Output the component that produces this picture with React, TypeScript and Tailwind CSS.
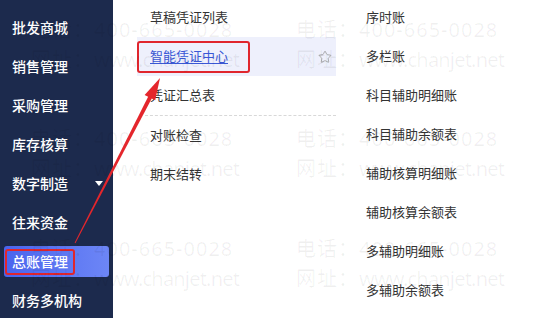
import { Star } from "lucide-react";

const sideItems = [
  "批发商城",
  "销售管理",
  "采购管理",
  "库存核算",
  "数字制造",
  "往来资金",
  "总账管理",
  "财务多机构",
];

const rightItems = [
  "序时账",
  "多栏账",
  "科目辅助明细账",
  "科目辅助余额表",
  "辅助核算明细账",
  "辅助核算余额表",
  "多辅助明细账",
  "多辅助余额表",
];

const marks = [
  { left: 31, top: 15 },
  { left: 296, top: 15 },
  { left: 31, top: 124 },
  { left: 296, top: 124 },
  { left: 31, top: 234 },
  { left: 296, top: 234 },
];

function SideItem({ label }: { label: string }) {
  if (label === "总账管理") {
    return (
      <div className="h-[39px] flex items-center px-1">
        <div className="h-[31px] w-full rounded-[3px] bg-gradient-to-r from-[#4a64ee] to-[#6d86f6] flex items-center pl-[1px]">
          <div className="h-[26px] px-[5px] border-2 border-[#e0262d] rounded-[3px] flex items-center text-white">
            {label}
          </div>
        </div>
      </div>
    );
  }
  return (
    <div className="h-[39px] flex items-center pl-3 pr-[10px] text-white">
      <span className="flex-1">{label}</span>
      {label === "数字制造" && (
        <span className="w-0 h-0 border-l-[4px] border-r-[4px] border-t-[5px] border-l-transparent border-r-transparent border-t-white" />
      )}
    </div>
  );
}

export default function App() {
  return (
    <div
      className="relative w-[533px] h-[318px] overflow-hidden bg-white flex"
      style={{ fontFamily: '"Noto Sans", "Noto Sans CJK SC", sans-serif' }}
    >
      <div className="w-[113px] shrink-0 bg-[#1c2a4d] pt-2 text-[14px] font-medium">
        {sideItems.map((s) => (
          <SideItem key={s} label={s} />
        ))}
      </div>

      <div className="relative flex-1 flex">
        {/* watermark */}
        <div className="absolute inset-0 pointer-events-none z-10 text-[20px] leading-[30px] text-black/[0.06]">
          {marks.map((m, i) => (
            <div
              key={i}
              className="absolute whitespace-nowrap"
              style={{ left: m.left - 113, top: m.top }}
            >
              <div className="tracking-[1px]">电话：400-665-0028</div>
              <div>
                <span className="tracking-[1px]">网址：</span>
                <span className="tracking-[-0.8px]">www.chanjet.net</span>
              </div>
            </div>
          ))}
        </div>

        <div className="ml-[24px] w-[199px] -mt-[2px] text-[13px] text-[#333]">
          <div className="h-[39px] flex items-center pl-[13px]">草稿凭证列表</div>
          <div className="h-[39px] flex items-center bg-[#eef0fc] pr-[4px]">
            <div className="h-[32px] w-[113px] border-2 border-[#e0262d] rounded-[3px] flex items-center pl-[11px] text-[#3a58d6] underline underline-offset-2">
              智能凭证中心
            </div>
            <div className="flex-1" />
            <Star size={14} strokeWidth={1.4} className="text-[#9a9a9a]" />
          </div>
          <div className="h-[39px] flex items-center pl-[13px]">凭证汇总表</div>
          <div className="ml-2 border-t border-dashed border-[#d8d8d8]" />
          <div className="h-[39px] flex items-center pl-[13px]">对账检查</div>
          <div className="h-[39px] flex items-center pl-[13px]">期末结转</div>
        </div>

        <div className="ml-[30px] -mt-[2px] text-[13px] text-[#333]">
          {rightItems.map((r) => (
            <div key={r} className="h-[39px] flex items-center">
              {r}
            </div>
          ))}
        </div>
      </div>

      {/* red annotation arrow */}
      <svg
        className="absolute inset-0 pointer-events-none z-20"
        width={533}
        height={318}
        viewBox="0 0 533 318"
      >
        <polygon
          points="75.4,243.2 74.6,242.8 150,93.1 153.6,94.9"
          fill="#e4262c"
        />
        <polygon points="160,78 155.2,100.3 144.6,94.9" fill="#e4262c" />
      </svg>
    </div>
  );
}
